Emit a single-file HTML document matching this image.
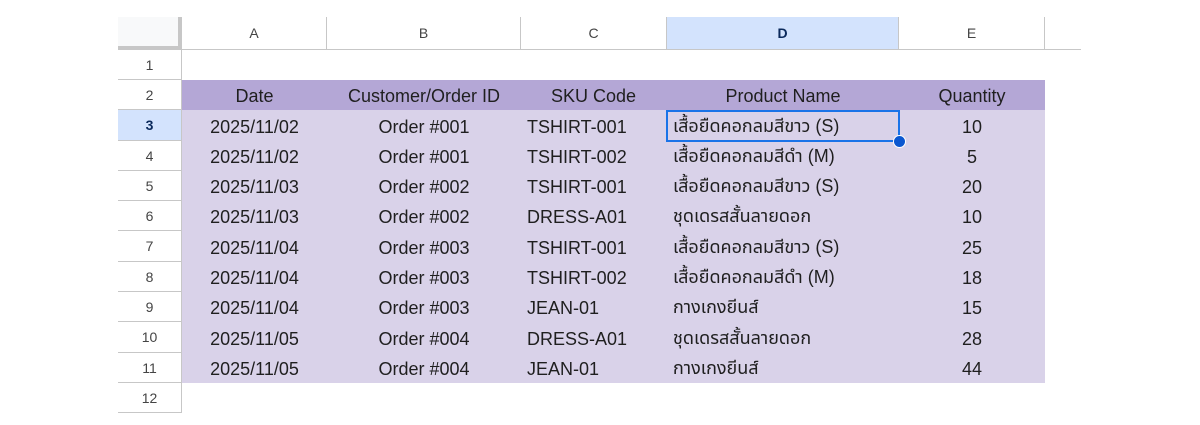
<!DOCTYPE html>
<html><head><meta charset="utf-8"><style>
*{margin:0;padding:0;box-sizing:border-box}
body{width:1200px;height:425px;background:#fff;position:relative;overflow:hidden;font-family:"Liberation Sans","Noto Sans Thai","Noto Sans CJK JP",sans-serif;color:#1f1f1f}
.ch{position:absolute;top:17px;height:33px;border-right:1px solid #c7c7c7;border-bottom:1px solid #c7c7c7;font-size:14px;color:#444;display:flex;align-items:center;justify-content:center}
.corner{position:absolute;left:118px;top:17px;width:64px;height:33px;background:#f8f9fa;border-right:4px solid #c7c7c7;border-bottom:4px solid #c7c7c7}
.row{position:absolute;left:118px;height:31px;display:flex}
.rh{width:64px;border-right:1px solid #c7c7c7;border-bottom:1px solid #c7c7c7;font-size:14px;color:#444;display:flex;align-items:center;justify-content:center;background:#fff}
.c{height:100%;display:flex;align-items:center;font-size:18px;padding-top:3px;white-space:nowrap}
.a{width:145px;justify-content:center}.b{width:194px;justify-content:center}.cc{width:146px;padding-left:6px}.d{width:232px;padding-left:6px}.e{width:146px;justify-content:center}
.hd .c{background:#b4a7d6}
.dt .c{background:#d9d2e9}
</style></head><body>
<div style="position:absolute;left:182px;top:80px;width:863px;height:303px;background:#d9d2e9"></div>
<div class="corner"></div>
<div class="ch" style="left:182px;width:145px">A</div>
<div class="ch" style="left:327px;width:194px">B</div>
<div class="ch" style="left:521px;width:146px">C</div>
<div class="ch" style="left:667px;width:232px;background:#d3e3fd;color:#0b2a5c;font-weight:bold">D</div>
<div class="ch" style="left:899px;width:146px">E</div>
<div class="ch" style="left:1045px;width:36px;border-right:none"></div>

<div class="row" style="top:50px;height:30px"><div class="rh">1</div></div>
<div class="row hd" style="top:80px;height:30px"><div class="rh">2</div><div class="c a">Date</div><div class="c b">Customer/Order ID</div><div class="c cc" style="padding-left:30px">SKU Code</div><div class="c d" style="justify-content:center;padding-left:0">Product Name</div><div class="c e">Quantity</div></div>
<div class="row dt" style="top:110px"><div class="rh" style="background:#d3e3fd;color:#0b2a5c;font-weight:bold">3</div><div class="c a">2025/11/02</div><div class="c b">Order #001</div><div class="c cc">TSHIRT-001</div><div class="c d">เสื้อยืดคอกลมสีขาว (S)</div><div class="c e">10</div></div>
<div class="row dt" style="top:141px;height:30px"><div class="rh">4</div><div class="c a">2025/11/02</div><div class="c b">Order #001</div><div class="c cc">TSHIRT-002</div><div class="c d">เสื้อยืดคอกลมสีดำ (M)</div><div class="c e">5</div></div>
<div class="row dt" style="top:171px;height:30px"><div class="rh">5</div><div class="c a">2025/11/03</div><div class="c b">Order #002</div><div class="c cc">TSHIRT-001</div><div class="c d">เสื้อยืดคอกลมสีขาว (S)</div><div class="c e">20</div></div>
<div class="row dt" style="top:201px;height:30px"><div class="rh">6</div><div class="c a">2025/11/03</div><div class="c b">Order #002</div><div class="c cc">DRESS-A01</div><div class="c d">ชุดเดรสสั้นลายดอก</div><div class="c e">10</div></div>
<div class="row dt" style="top:231px"><div class="rh">7</div><div class="c a">2025/11/04</div><div class="c b">Order #003</div><div class="c cc">TSHIRT-001</div><div class="c d">เสื้อยืดคอกลมสีขาว (S)</div><div class="c e">25</div></div>
<div class="row dt" style="top:262px;height:30px"><div class="rh">8</div><div class="c a">2025/11/04</div><div class="c b">Order #003</div><div class="c cc">TSHIRT-002</div><div class="c d">เสื้อยืดคอกลมสีดำ (M)</div><div class="c e">18</div></div>
<div class="row dt" style="top:292px;height:30px"><div class="rh">9</div><div class="c a">2025/11/04</div><div class="c b">Order #003</div><div class="c cc">JEAN-01</div><div class="c d">กางเกงยีนส์</div><div class="c e">15</div></div>
<div class="row dt" style="top:322px"><div class="rh">10</div><div class="c a">2025/11/05</div><div class="c b">Order #004</div><div class="c cc">DRESS-A01</div><div class="c d">ชุดเดรสสั้นลายดอก</div><div class="c e">28</div></div>
<div class="row dt" style="top:353px;height:30px"><div class="rh">11</div><div class="c a">2025/11/05</div><div class="c b">Order #004</div><div class="c cc">JEAN-01</div><div class="c d">กางเกงยีนส์</div><div class="c e">44</div></div>
<div class="row" style="top:383px;height:30px"><div class="rh">12</div></div>

<div style="position:absolute;left:666px;top:110px;width:234px;height:32px;border:2px solid #1a73e8"></div>
<div style="position:absolute;left:893px;top:135px;width:13px;height:13px;border-radius:50%;background:#0b57d0;border:1px solid #fff"></div>
</body></html>
